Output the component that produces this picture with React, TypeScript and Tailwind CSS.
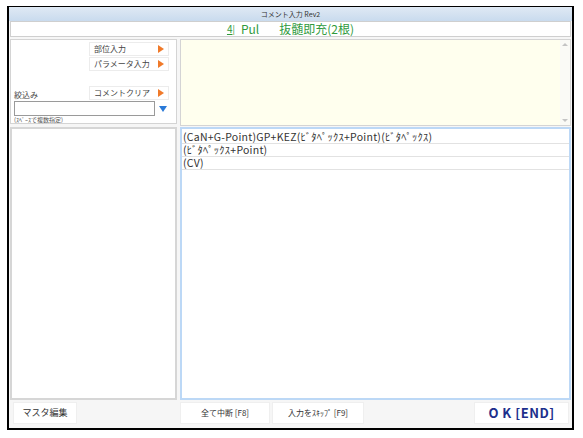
import React from 'react';

const FONT = { fontFamily: '"Noto Sans CJK JP", "Noto Sans", sans-serif' };

function SideButton({ label }: { label: string }) {
  return (
    <div className="flex items-center justify-between h-[14px] w-[80px] bg-white border border-[#ececec] pl-[4px] pr-[4px]">
      <span className="text-[8px] leading-none text-[#444]">{label}</span>
      <span className="w-0 h-0 border-t-[4px] border-b-[4px] border-l-[6px] border-t-transparent border-b-transparent border-l-[#f07a2a]" />
    </div>
  );
}

function FooterButton({ label, className }: { label: string; className: string }) {
  return (
    <div className={`flex items-center justify-center h-[22px] bg-white border border-[#efefef] text-[8px] text-[#333] ${className}`}>
      {label}
    </div>
  );
}

const ROWS = [
  '(CaN+G-Point)GP+KEZ(ﾋﾞﾀﾍﾟｯｸｽ+Point)(ﾋﾞﾀﾍﾟｯｸｽ)',
  '(ﾋﾞﾀﾍﾟｯｸｽ+Point)',
  '(CV)',
];

export default function App() {
  return (
    <div className="w-[583px] h-[438px] bg-white pt-[6px] pl-[7px]" style={FONT}>
      <div className="w-[567px] h-[424px] border-l-2 border-r-2 border-b-2 border-t border-black bg-[#f6f6f6] flex flex-col">
        {/* title bar */}
        <div className="h-[14px] bg-gradient-to-b from-[#dfe9f4] to-[#c9dbee] flex items-center justify-center text-[7px] text-[#333] leading-none">
          コメント入力 Rev2
        </div>

        {/* header */}
        <div className="mx-[1px] h-[16px] bg-white border border-[#cfcfcf] flex items-center justify-center text-[12px] leading-none text-[#2f9a3c]">
          <span className="underline text-[10px]">4</span>
          <span className="text-[9px] mr-[6px]">|</span>
          <span>Pul</span>
          <span className="ml-[20px]">抜髄即充(2根)</span>
        </div>

        {/* main */}
        <div className="flex mt-[2px] pl-[1px] h-[361px]">
          {/* left */}
          <div className="w-[167px] flex flex-col">
            <div className="h-[85px] bg-white border border-[#d4d4d4]">
              <div className="flex flex-col gap-[1px] pl-[78px] pt-[2px]">
                <SideButton label="部位入力" />
                <SideButton label="パラメータ入力" />
              </div>
              <div className="flex items-end mt-[15px]">
                <span className="text-[8px] leading-none text-[#444] pl-[3px] w-[78px] pb-[1px]">絞込み</span>
                <SideButton label="コメントクリア" />
              </div>
              <div className="flex items-center mt-[1px] pl-[3px]">
                <div className="w-[141px] h-[15px] bg-white border border-[#9a9a9a]" />
                <span className="ml-[4px] w-0 h-0 border-l-[4px] border-r-[4px] border-t-[6px] border-l-transparent border-r-transparent border-t-[#2a7ad8]" />
              </div>
              <div className="text-[6px] leading-none text-[#555] pl-[3px] mt-[1px]">(ｽﾍﾟｰｽで複数指定)</div>
            </div>
            <div className="mt-[3px] flex-1 bg-white border-2 border-[#d6d6d6]" />
          </div>

          {/* right */}
          <div className="ml-[3px] w-[391px] flex flex-col">
            <div className="h-[87px] bg-[#ffffee] border border-[#d4d4d4] flex justify-end">
              <div className="w-[10px] h-full bg-[#fafaf6] flex flex-col items-center justify-between py-[3px]">
                <span className="w-0 h-0 border-l-[3px] border-r-[3px] border-b-[3px] border-l-transparent border-r-transparent border-b-[#c4c4c4]" />
                <span className="w-0 h-0 border-l-[3px] border-r-[3px] border-t-[3px] border-l-transparent border-r-transparent border-t-[#c4c4c4]" />
              </div>
            </div>
            <div className="mt-[1px] flex-1 bg-white border-2 border-[#bcd8f6] pt-[2px]">
              {ROWS.map((r) => (
                <div key={r} className="h-[13px] border-b border-[#e2e2e2] flex items-center pl-[1px]">
                  <span className="text-[10.5px] leading-none tracking-[0.25px] text-[#333] whitespace-nowrap">{r}</span>
                </div>
              ))}
            </div>
          </div>
        </div>

        {/* footer */}
        <div className="flex items-center mt-[2px] pl-[4px]">
          <FooterButton label="マスタ編集" className="w-[64px] text-[9px]" />
          <FooterButton label="全て中断 [F8]" className="w-[90px] ml-[103px]" />
          <FooterButton label="入力をｽｷｯﾌﾟ [F9]" className="w-[92px] ml-[2px]" />
          <div className="ml-[110px] w-[95px] h-[22px] bg-white border border-[#efefef] flex items-center justify-center text-[13px] font-bold text-[#1d2f8c] tracking-[0.5px]">
            O K [END]
          </div>
        </div>
      </div>
    </div>
  );
}
